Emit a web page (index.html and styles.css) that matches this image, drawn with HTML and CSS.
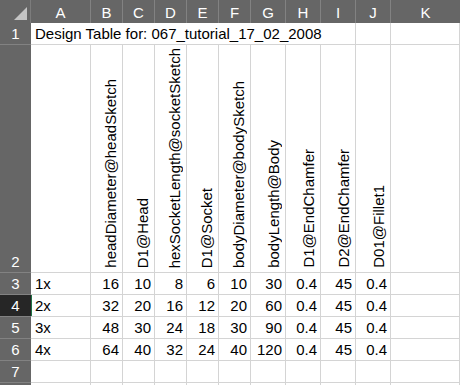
FILE: index.html
```html
<!DOCTYPE html>
<html>
<head>
<meta charset="utf-8">
<link rel="stylesheet" href="styles.css">
</head>
<body>
<div class="sheet">
  <div class="corner"><svg class="corner-mark" width="14" height="14" viewBox="0 0 14 14"><polygon points="13,0 13,13 0,13" fill="#c4c4c4"/></svg></div>
  <div class="colhead">A</div>
  <div class="colhead">B</div>
  <div class="colhead">C</div>
  <div class="colhead">D</div>
  <div class="colhead">E</div>
  <div class="colhead">F</div>
  <div class="colhead">G</div>
  <div class="colhead">H</div>
  <div class="colhead">I</div>
  <div class="colhead">J</div>
  <div class="colhead last">K</div>

  <div class="rowhead">1</div>
  <div class="cell title">Design Table for: 067_tutorial_17_02_2008</div>
  <div class="cell"></div>
  <div class="cell"></div>

  <div class="rowhead tall">2</div>
  <div class="cell"></div>
  <div class="cell vert"><span>headDiameter@headSketch</span></div>
  <div class="cell vert"><span>D1@Head</span></div>
  <div class="cell vert"><span>hexSocketLength@socketSketch</span></div>
  <div class="cell vert"><span>D1@Socket</span></div>
  <div class="cell vert"><span>bodyDiameter@bodySketch</span></div>
  <div class="cell vert"><span>bodyLength@Body</span></div>
  <div class="cell vert"><span>D1@EndChamfer</span></div>
  <div class="cell vert"><span>D2@EndChamfer</span></div>
  <div class="cell vert"><span>D01@Fillet1</span></div>
  <div class="cell"></div>

  <div class="rowhead">3</div>
  <div class="cell txt">1x</div>
  <div class="cell num">16</div>
  <div class="cell num">10</div>
  <div class="cell num">8</div>
  <div class="cell num">6</div>
  <div class="cell num">10</div>
  <div class="cell num">30</div>
  <div class="cell num">0.4</div>
  <div class="cell num">45</div>
  <div class="cell num">0.4</div>
  <div class="cell"></div>

  <div class="rowhead selected">4</div>
  <div class="cell txt">2x</div>
  <div class="cell num">32</div>
  <div class="cell num">20</div>
  <div class="cell num">16</div>
  <div class="cell num">12</div>
  <div class="cell num">20</div>
  <div class="cell num">60</div>
  <div class="cell num">0.4</div>
  <div class="cell num">45</div>
  <div class="cell num">0.4</div>
  <div class="cell"></div>

  <div class="rowhead">5</div>
  <div class="cell txt">3x</div>
  <div class="cell num">48</div>
  <div class="cell num">30</div>
  <div class="cell num">24</div>
  <div class="cell num">18</div>
  <div class="cell num">30</div>
  <div class="cell num">90</div>
  <div class="cell num">0.4</div>
  <div class="cell num">45</div>
  <div class="cell num">0.4</div>
  <div class="cell"></div>

  <div class="rowhead">6</div>
  <div class="cell txt">4x</div>
  <div class="cell num">64</div>
  <div class="cell num">40</div>
  <div class="cell num">32</div>
  <div class="cell num">24</div>
  <div class="cell num">40</div>
  <div class="cell num">120</div>
  <div class="cell num">0.4</div>
  <div class="cell num">45</div>
  <div class="cell num">0.4</div>
  <div class="cell"></div>

  <div class="rowhead">7</div>
  <div class="cell"></div>
  <div class="cell"></div>
  <div class="cell"></div>
  <div class="cell"></div>
  <div class="cell"></div>
  <div class="cell"></div>
  <div class="cell"></div>
  <div class="cell"></div>
  <div class="cell"></div>
  <div class="cell"></div>
  <div class="cell"></div>

  <div class="rowhead"></div>
  <div class="cell"></div>
  <div class="cell"></div>
  <div class="cell"></div>
  <div class="cell"></div>
  <div class="cell"></div>
  <div class="cell"></div>
  <div class="cell"></div>
  <div class="cell"></div>
  <div class="cell"></div>
  <div class="cell"></div>
  <div class="cell"></div>
</div>
</body>
</html>
```
FILE: styles.css
```css
html, body {
  margin: 0;
  padding: 0;
  background: #ffffff;
  overflow: hidden;
}

.sheet {
  display: grid;
  grid-template-columns: 31px 60px 32px 32px 32px 32px 32px 35px 35px 35px 35px 1fr;
  grid-template-rows: 23px 22px 228px 22px 22px 22px 22px 22px 22px;
  width: 460px;
  height: 385px;
  overflow: hidden;
  font-family: "Liberation Sans", Arial, sans-serif;
  font-size: 15px;
  color: #000000;
}

.corner {
  background: #666666;
  border-right: 1px solid #7c7c7c;
  box-sizing: border-box;
  display: flex;
  justify-content: flex-end;
  align-items: flex-end;
  padding: 0 2px 2px 0;
}

.corner-mark {
  display: block;
}

.colhead {
  background: #666666;
  color: #ffffff;
  border-right: 1px solid #828282;
  box-sizing: border-box;
  display: flex;
  justify-content: center;
  align-items: center;
  padding-top: 1px;
}

.colhead.last {
  border-right: none;
}

.rowhead {
  background: #666666;
  color: #ffffff;
  border-bottom: 1px solid #828282;
  box-sizing: border-box;
  display: flex;
  justify-content: center;
  align-items: flex-end;
  padding-bottom: 2px;
}

.rowhead.selected {
  background: #262626;
  box-shadow: 1px 0 0 #217346;
}

.cell {
  border-right: 1px solid #d4d4d4;
  border-bottom: 1px solid #d4d4d4;
  box-sizing: border-box;
  overflow: hidden;
  white-space: nowrap;
  display: flex;
  align-items: flex-end;
  padding-bottom: 2px;
}

.title {
  grid-column: span 9;
  padding-left: 4px;
}

.txt {
  padding-left: 4px;
}

.num {
  justify-content: flex-end;
  padding-right: 3px;
}

.vert {
  justify-content: flex-end;
  padding: 0 3px 4px 0;
}

.vert span {
  writing-mode: vertical-rl;
  transform: rotate(180deg);
  white-space: nowrap;
  line-height: 17px;
}
```
